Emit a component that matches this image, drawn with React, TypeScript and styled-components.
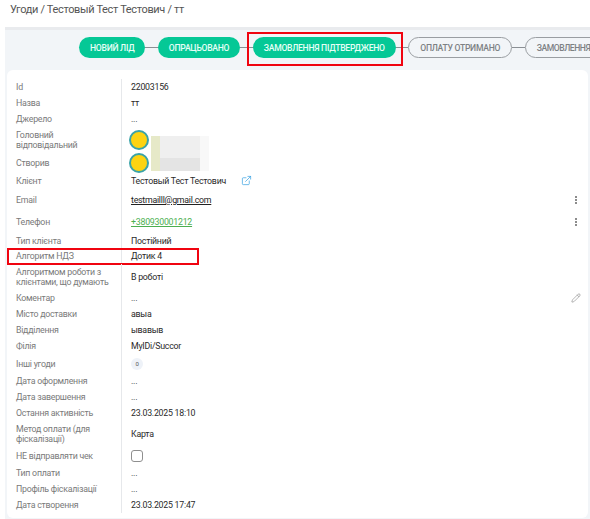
import React from "react";
import styled, { createGlobalStyle } from "styled-components";
import { ExternalLink, Pencil } from "lucide-react";

const GlobalStyle = createGlobalStyle`
  html, body {
    margin: 0;
    padding: 0;
    background: #fff;
  }
  body {
    font-family: Roboto, "Liberation Sans", sans-serif;
  }
`;

const steps = [
  { id: "new", title: "НОВИЙ ЛІД", done: true },
  { id: "processed", title: "ОПРАЦЬОВАНО", done: true },
  { id: "confirmed", title: "ЗАМОВЛЕННЯ ПІДТВЕРДЖЕНО", done: true, marked: true },
  { id: "paid", title: "ОПЛАТУ ОТРИМАНО", done: false },
  { id: "ordered", title: "ЗАМОВЛЕННЯ", done: false, cut: true },
];

const App = () => {
  return (
    <Page>
      <GlobalStyle />
      <Breadcrumbs>Угоди / Тестовый Тест Тестович / тт</Breadcrumbs>
      <Content>
        <Stepper>
          {steps.map((v, i) => (
            <React.Fragment key={v.id}>
              {i > 0 && <Connector />}
              <Step $done={v.done} $cut={!!v.cut}>
                {v.title}
                {v.marked && <RedFrame />}
              </Step>
            </React.Fragment>
          ))}
        </Stepper>
        <Panel>
          <Row $h={16}>
            <Label>Id</Label>
            <Value>22003156</Value>
          </Row>
          <Row $h={16}>
            <Label>Назва</Label>
            <Value>тт</Value>
          </Row>
          <Row $h={16}>
            <Label>Джерело</Label>
            <Value>...</Value>
          </Row>
          <Row $h={26}>
            <Label>Головний відповідальний</Label>
            <Value>
              <Avatar />
              <Redacted>
                <i />
                <i />
                <i />
                <i />
              </Redacted>
            </Value>
          </Row>
          <Row $h={20}>
            <Label>Створив</Label>
            <Value>
              <Avatar />
            </Value>
          </Row>
          <Row $h={16}>
            <Label>Клієнт</Label>
            <Value>
              Тестовый Тест Тестович
              <ClientLink>
                <ExternalLink size={11} strokeWidth={1.5} />
              </ClientLink>
            </Value>
          </Row>
          <Row $h={22}>
            <Label>Email</Label>
            <Value>
              <Mail>testmailll@gmail.com</Mail>
            </Value>
            <Action>
              <Kebab />
            </Action>
          </Row>
          <Row $h={22}>
            <Label>Телефон</Label>
            <Value>
              <Phone>+380930001212</Phone>
            </Value>
            <Action>
              <Kebab />
            </Action>
          </Row>
          <Row $h={15}>
            <Label>Тип клієнта</Label>
            <Value>Постійний</Value>
          </Row>
          <Row $h={16}>
            <Label>Алгоритм НДЗ</Label>
            <Value>Дотик 4</Value>
            <RowFrame />
          </Row>
          <Row $h={26}>
            <Label>Алгоритмом роботи з клієнтами, що думають</Label>
            <Value>В роботі</Value>
          </Row>
          <Row $h={16}>
            <Label>Коментар</Label>
            <Value>...</Value>
            <Action>
              <Pencil size={10} strokeWidth={1.3} color="#777" />
            </Action>
          </Row>
          <Row $h={16}>
            <Label>Місто доставки</Label>
            <Value>авыа</Value>
          </Row>
          <Row $h={16}>
            <Label>Відділення</Label>
            <Value>ывавыв</Value>
          </Row>
          <Row $h={16}>
            <Label>Філія</Label>
            <Value>MyIDi/Succor</Value>
          </Row>
          <Row $h={19}>
            <Label>Інші угоди</Label>
            <Value>
              <Counter>0</Counter>
            </Value>
          </Row>
          <Row $h={16}>
            <Label>Дата оформлення</Label>
            <Value>...</Value>
          </Row>
          <Row $h={16}>
            <Label>Дата завершення</Label>
            <Value>...</Value>
          </Row>
          <Row $h={16}>
            <Label>Остання активність</Label>
            <Value>23.03.2025 18:10</Value>
          </Row>
          <Row $h={26}>
            <Label>Метод оплати (для фіскалізації)</Label>
            <Value>Карта</Value>
          </Row>
          <Row $h={18}>
            <Label>НЕ відправляти чек</Label>
            <Value>
              <CheckBox />
            </Value>
          </Row>
          <Row $h={16}>
            <Label>Тип оплати</Label>
            <Value>...</Value>
          </Row>
          <Row $h={16}>
            <Label>Профіль фіскалізації</Label>
            <Value>...</Value>
          </Row>
          <Row $h={16}>
            <Label>Дата створення</Label>
            <Value>23.03.2025 17:47</Value>
          </Row>
        </Panel>
      </Content>
    </Page>
  );
};

export default App;

const Page = styled.div`
  width: 590px;
  height: 519px;
  overflow: hidden;
  background: #fff;
`;

const Breadcrumbs = styled.div`
  height: 27px;
  padding: 3px 0 0 10px;
  box-sizing: border-box;
  font-size: 11px;
  letter-spacing: -0.34px;
  line-height: 14px;
  color: #555;
`;

const Content = styled.div`
  margin-left: 5px;
  height: 492px;
  box-sizing: border-box;
  padding-top: 7px;
  border-top: 3px solid #e9ebee;
  background: #f2f5f8;
  overflow: hidden;
`;

const Stepper = styled.div`
  display: flex;
  align-items: center;
  height: 21px;
  padding-left: 74px;
  margin-bottom: 12px;
  white-space: nowrap;
`;

const Connector = styled.span`
  flex: none;
  width: 12.5px;
  height: 1px;
  background: #8a8f94;
`;

const Step = styled.div<{ $done: boolean; $cut: boolean }>`
  position: relative;
  flex: none;
  height: 21px;
  box-sizing: border-box;
  padding: 0 ${(props) => (props.$cut ? "30px" : "11px")} 0 11px;
  display: flex;
  align-items: center;
  border-radius: 11px;
  font-size: 8.6px;
  letter-spacing: ${(props) => (props.$cut ? "-0.45px" : "-0.27px")};
  font-weight: 500;
  color: ${(props) => (props.$done ? "#e6fff6" : "#7d8184")};
  background: ${(props) => (props.$done ? "#05c896" : "transparent")};
  border: ${(props) => (props.$done ? "none" : "1px solid #9a9ea2")};
`;

const RedFrame = styled.span`
  position: absolute;
  top: -5px;
  bottom: -8px;
  left: -6px;
  right: -7px;
  border: 2px solid #f00410;
`;

const Panel = styled.div`
  margin: 0 2px 0 2px;
  height: 448px;
  box-sizing: border-box;
  padding: 9px 0 5px 9px;
  background: #fff;
  border-radius: 6px;
`;

const Row = styled.div<{ $h: number }>`
  position: relative;
  display: grid;
  grid-template-columns: 106px 1fr 24px;
  height: ${(props) => props.$h}px;
`;

const RowFrame = styled.span`
  position: absolute;
  top: 0;
  left: -9px;
  width: 192px;
  height: 17px;
  box-sizing: border-box;
  border: 2px solid #f00410;
`;

const Label = styled.div`
  display: flex;
  align-items: center;
  padding-right: 8px;
  border-right: 1px solid #e6e8eb;
  font-size: 8.8px;
  letter-spacing: -0.25px;
  line-height: 10px;
  color: #7a7a7a;
`;

const Value = styled.div`
  position: relative;
  display: flex;
  align-items: center;
  padding-left: 9px;
  font-size: 8.8px;
  letter-spacing: -0.25px;
  color: #2a2a2a;
`;

const Action = styled.div`
  display: flex;
  align-items: center;
  justify-content: center;
`;

const Avatar = styled.span`
  flex: none;
  width: 20px;
  height: 20px;
  box-sizing: border-box;
  margin-left: -2px;
  border-radius: 50%;
  border: 2px solid #3aa3a8;
  background: #fdd312;
`;

const Redacted = styled.div`
  position: absolute;
  top: 9px;
  left: 29px;
  width: 58px;
  height: 35px;
  display: grid;
  grid-template-columns: 9px 40px 9px;
  grid-template-rows: 22px 13px;

  i:nth-child(1) {
    grid-column: 1;
    grid-row: 1 / span 2;
    background: #e6e9c8;
  }
  i:nth-child(2) {
    grid-column: 2;
    grid-row: 1;
    background: #efefef;
  }
  i:nth-child(3) {
    grid-column: 2;
    grid-row: 2;
    background: #e4e4e4;
  }
  i:nth-child(4) {
    grid-column: 3;
    grid-row: 1 / span 2;
    background: #f8f8f8;
  }
`;

const ClientLink = styled.span`
  display: flex;
  margin-left: 15px;
  margin-top: -1px;
  color: #2f9ee0;
`;

const Mail = styled.span`
  color: #222;
  text-decoration: underline;
`;

const Phone = styled.span`
  color: #4caf50;
  text-decoration: underline;
`;

const Kebab = styled.span`
  width: 2px;
  height: 2px;
  border-radius: 50%;
  background: #666;
  box-shadow: 0 -3px 0 #666, 0 3px 0 #666;
`;

const Counter = styled.span`
  width: 12px;
  height: 12px;
  display: flex;
  align-items: center;
  justify-content: center;
  border-radius: 50%;
  background: #eef2f8;
  font-size: 6px;
  color: #555;
`;

const CheckBox = styled.span`
  width: 12px;
  height: 12px;
  box-sizing: border-box;
  border: 1px solid #8f8f8f;
  border-radius: 3px;
  background: #fff;
`;
